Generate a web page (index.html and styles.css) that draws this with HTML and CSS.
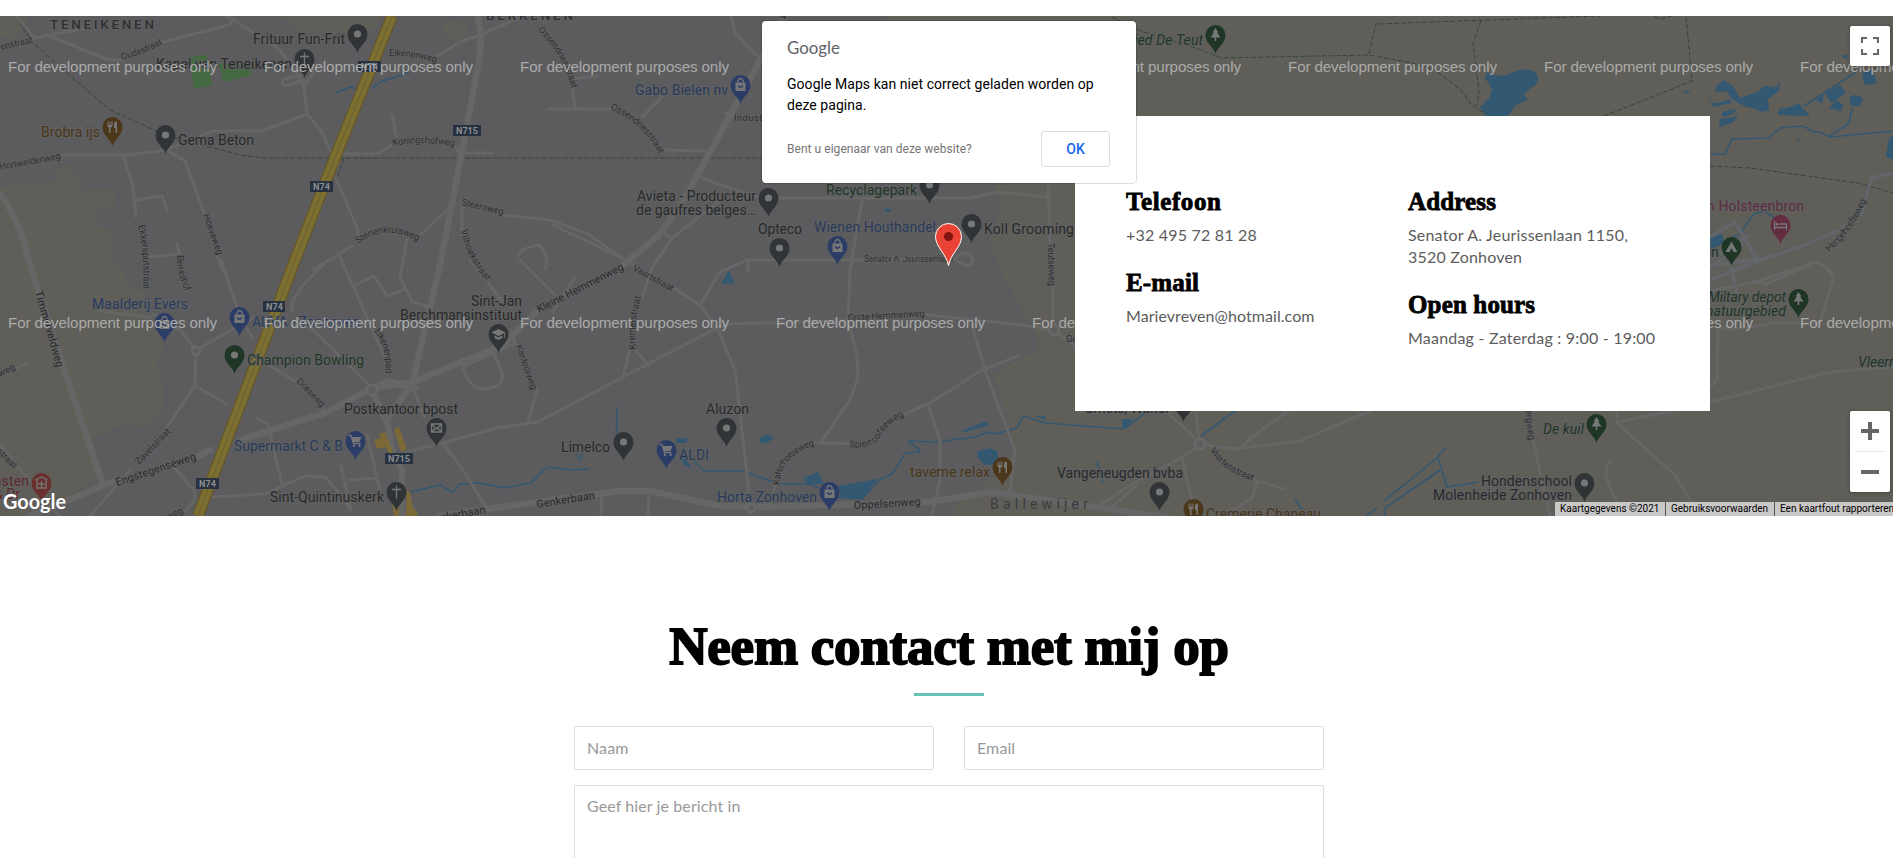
FILE: index.html
```html
<!DOCTYPE html>
<html lang="nl">
<head>
<meta charset="utf-8">
<title>Contact</title>
<link rel="stylesheet" href="styles.css">
</head>
<body>
<section class="map">
<svg class="map-canvas" viewBox="0 16 1893 500" width="1893" height="500">
<defs>
<path id="pin" d="M0 19C-1.600 12-10 8.500-10 0A10 10 0 0 1 10 0C10 8.500 1.600 12 0 19Z"/>
<g id="dot"><circle r="3.600"/></g>
<g id="bag"><path d="M-5-2.500H5V6H-5Z"/><path class="line" d="M-2.600-2.500V-4.500Q0-8.500 2.600-4.500V-2.500"/><path class="cut" d="M-2.500.500Q0 4 2.500.500"/></g>
<g id="cart"><path d="M-4-4H6L4 1H-2.500Z"/><path class="line" d="M-7-5.500H-4.500L-2 2.500H5"/><circle cx="-1.500" cy="4.800" r="1.200"/><circle cx="4" cy="4.800" r="1.200"/></g>
<g id="cross"><path class="line" d="M0-6.500V6.500M-4.500-2.500H4.500"/></g>
<g id="food"><path d="M-5-5.500V-1.500Q-5 .500-3.500.500V6H-2V.500Q0 .500 0-1.500V-5.500H-1V-2H-2V-5.500H-3V-2H-4V-5.500ZM1.500-3Q1.500-5.500 4.500-5.500V6H3V1H1.500Z"/></g>
<g id="tree"><path d="M0-7L3-2.500H1.500L5 2.500H.800V6H-.800V2.500H-5L-1.500-2.500H-3Z"/></g>
<g id="mail"><path class="line" d="M-5-4H5V4H-5ZM-5-4L0 1L5-4M-5 4L-1 0M5 4L1 0"/></g>
<g id="hat"><path d="M0-5L7-1.500L0 2L-7-1.500ZM-4 1.500L0 3.500L4 1.500V4L0 6L-4 4ZM5.800-1H6.800V4H5.800Z"/></g>
<g id="tent"><path d="M0-5.500L6 5H2L0 1L-2 5H-6Z"/></g>
<g id="bed"><path class="line" d="M-6-4V5M-6 2.500H6M6-1V5M-1-1H6"/><circle cx="-3.500" cy="-.800" r="1.500"/></g>
<g id="care"><path class="line" d="M-6-3L0-6L6-3M-4.500-3.500V5H4.500V-3.500M0-2V4M-3 1H3"/></g>
</defs>
<rect class="land" y="16" width="1893" height="500"/>
<g class="heath">
<path d="M0 16H30L13 40L0 35ZM278 16H384L375 29L345 35L300 31ZM444 20L467 22L468 34L455 41L443 31ZM0 187L55 181V170L70 163L75 178L84 181L80 190L115 190L116 205L95 210L96 225L110 229L112 263L125 275L128 288L143 290L150 320L165 347L156 360L163 385L164 405L152 417L147 424L139 428L130 422L92 438L97 460L97 478L40 516H0Z"/>
<path d="M885 16H1893V516H953L954 506L980 490L1013 453L1012 430L993 373L1038 350V337L1000 270L989 240L1001 210L994 183H885Z"/>
</g>
<path class="park" d="M190 57L207 55L212 85L194 89ZM219 63L248 66L252 75L223 82Z"/>
<g class="water">
<path d="M1487 72C1500 79 1508 75 1516 71C1539 65 1540 79 1536 84L1526 92L1524 96Q1532 100 1522 102C1511 107 1514 112 1507 116H1486L1480 107L1489 98L1492 89L1485 78Z"/>
<path d="M1715 88L1723 80L1733 86Q1737 94 1740 98L1757 92L1765 86L1776 87L1780 82L1779 91L1768 99L1769 110L1762 112Q1752 107 1746 107L1733 100L1726 91L1716 92ZM1709 97L1710 103H1718L1731 99V103L1713 107ZM1722 112L1737 109L1733 114L1722 117ZM1720 119L1739 116L1732 123L1719 127ZM1779 109L1790 107L1798 103L1809 114V116L1778 115ZM1862 73L1873 70L1877 83L1864 85ZM1825 93L1840 85L1846 93L1831 103ZM1829 108L1836 100L1843 105L1841 111ZM1850 97Q1858 92 1863 100L1859 107L1850 105ZM1816 100L1824 94L1822 104ZM1842 56L1847 54V60ZM1684 90L1690 92L1688 94L1683 92ZM1798 138L1800 143L1796 138ZM1889 138L1893 136V160L1886 157ZM1710 237L1722 234L1725 243L1711 248Z"/>
<path d="M721 284L729 270L734 283ZM676 438H687V443H676ZM680 456L686 459L692 469L685 466ZM760 438L768 434L773 438L766 444L760 442ZM804 478L818 472L824 484L806 484ZM838 486L877 479L862 499L841 497ZM961 431L987 421L988 426L964 432ZM977 452L990 448L997 451L999 465H985L978 458ZM1122 419L1133 419L1126 428L1122 427ZM1036 416H1045V420Z"/>
<path d="M885 208L891 210V212H885Z"/>
</g>
<g class="stream">
<path d="M336 93L350 87L362 90M372 88L380 82L410 72M410 492L440 485L453 492L460 484L480 483L504 488L531 483L547 467L573 470L589 469M616 450L617 407M694 461L704 471L744 471L778 484L810 484L840 498L862 499L879 480L892 474L896 468L905 453L920 452L918 448L911 444L909 441L935 442L976 437L988 432L996 434L1017 428L1023 416L1045 423L1124 429L1145 413M1201 436L1235 411M1384 501L1437 458L1446 447M1438 458L1447 487L1478 482M1440 470L1385 508L1384 516M1295 499L1302 510M1366 516L1377 508M1097 462L1103 482M576 453Q582 466 582 452"/>
<path d="M1710 154H1725L1732 139L1769 138L1780 128L1803 126L1814 132H1820L1830 137L1893 131M1830 136L1849 123L1852 108M1804 106L1859 70M1710 249L1740 234L1754 214L1764 211L1778 220"/>
</g>
<g class="trail">
<path d="M16 16L32 42L75 80L110 110L165 135L240 155L264 158H764M344 158L337 178M1112 17L1141 31L1196 48L1221 58L1369 55L1412 63L1435 70L1461 90L1471 104L1485 114M1369 54L1376 24L1600 16M1481 21L1473 43L1479 90L1477 106M1604 116L1692 81L1686 16M1710 166L1750 168L1858 183L1893 193M1654 17L1661 19L1675 15"/>
</g>
<g class="road">
<path d="M16 16L35 38L0 50M35 38L85 28M50 36L108 60L124 60M163 42L229 25L234 19L226 16M234 20L279 49L296 72L304 86L316 69M304 80L285 86Q280 82 284 79L302 75M62 155H130L165 150L213 131H262L307 114L304 86M307 114L322 132L332 154H378L396 142M455 146L460 153H493M437 56L462 41L480 35L523 16M392 115L397 139M124 157L133 187L136 217M135 200L162 196L167 210M148 257L180 254L177 243M168 151L185 161L205 215M217 255L222 270M221 260L240 317L253 339M336 178L358 230L357 240M313 270L352 246M338 252L348 275L387 362M407 240L400 277L412 302L430 307M355 285L374 276L387 296L403 290M418 237L445 212L455 203M462 203V235M328 260L303 285L292 303L292 312M305 322L370 386M153 314L180 330L196 350L253 318M196 350L195 385L165 430M195 386L227 404M100 311L153 318M0 377L26 364M0 445L34 486L60 516M130 470L90 516M258 419L268 424L282 484M210 497L265 494L305 476L325 477L345 500L350 510M175 468L195 492V500L180 516M341 466L351 510M349 480L378 478M367 435L380 490M270 366L300 384M320 403L325 413M403 453L443 443L497 428L538 422L623 377L713 330L727 324L870 320M927 315L1023 325L1053 330L1075 345M443 443L463 470L486 507M414 390L424 417M463 367Q470 390 484 389Q508 387 501 370L494 354M463 367L515 343M537 390L528 422M515 344L511 330M575 277L552 313M553 225L620 257M518 256Q520 248 539 245Q551 259 545 269M470 260L504 303M520 260L555 295"/>
<path d="M504 215L550 220L588 234L625 260L680 292L700 305L718 330L735 370L742 430L751 513M700 305L720 272L747 260H952M748 260V270M663 232L672 238L652 268L642 298M672 238L727 195M695 175L715 183L728 187L765 200M548 109H610M575 108L571 79L597 76M642 117L665 94M660 150L705 151M725 113L742 119M731 16L735 33L756 55M631 345L623 377M631 345L648 365M602 494L601 516M649 493L648 516M770 505L776 484M813 443L868 444M822 441L850 400L858 378L857 355L848 320L850 270L862 200M900 416L930 403L962 383L980 371L1018 356M928 405L940 440V480L932 516M972 325L985 370L1015 450L1010 492M765 198H970L998 192L1048 197M1048 183L1050 243M1053 286L1053 330M955 260C961 250 969 252 973 258Q972 270 960 263Z"/>
<path d="M1165 410L1199 442L1196 411M1201 444L1232 449L1300 441L1370 411M1242 447L1252 437L1288 411M1196 448L1170 464L1136 482L1095 508M1110 509L1137 485M1182 458L1192 500M1254 480L1284 489M1257 483L1252 498L1230 512M1533 440L1550 516M1617 411V423L1675 475L1700 516M1618 422L1672 411M1710 402L1830 372L1893 367M1611 460L1606 468V477L1617 503M1710 291L1756 282L1815 262Q1832 267 1833 280L1820 323H1775L1728 330M1710 387L1717 380L1718 330L1730 326M1754 281L1766 284L1810 265"/>
<path class="pale" d="M1893 173L1872 178L1868 190L1862 213L1840 230L1800 247L1758 261L1710 280M1710 237L1735 222L1758 261M1710 268L1742 245M1710 259L1747 236M1710 265L1763 259M1730 260L1737 295"/>
</g>
<g class="road wide">
<path d="M0 194Q20 220 30 265L65 372L103 485M477 12L481 33L480 55L463 147L440 265L413 380M30 516L117 480M197 457L210 450M240 440L325 413L372 388L413 382L503 345L536 312M623 265L657 237L680 207L763 55L785 16M413 382L387 420L393 453L402 470V516M372 390L388 425M372 390L387 381L415 388M440 516L530 503L620 491L650 491L720 506L760 507L930 502L990 492L1060 502L1130 512L1170 518"/>
</g>
<g class="ring"><circle cx="196" cy="351" r="4"/><circle cx="372" cy="390" r="5"/><circle cx="1054" cy="330" r="5"/><circle cx="1200" cy="444" r="5"/><circle cx="751" cy="508" r="4"/></g>
<path class="built" d="M374 440L380 438L379 434L385 432L393 452L389 454L386 447L377 449ZM394 430L399 427L407 449L401 452ZM392 502H399V516H394ZM407 490L410 492L413 508L417 511V516H406Z"/>
<path class="hwy-edge" d="M392 16L336 155L295 260L198 516"/><path class="hwy" d="M392 16L336 155L295 260L198 516"/><path class="hwy-mid" d="M392 16L336 155L295 260L198 516"/>
<g class="shields">
<path d="M358 61H381V72H358ZM310 181H333V192H310ZM453 125H481V136H453ZM263 301H285V312H263ZM385 453H413V464H385ZM196 478H219V489H196Z"/>
<text x="361" y="70" textLength="17">N74</text><text x="313" y="190" textLength="17">N74</text><text x="456" y="134" textLength="22">N715</text><text x="266" y="310" textLength="17">N74</text><text x="388" y="462" textLength="22">N715</text><text x="199" y="487" textLength="17">N74</text>
</g>
<defs>
<path id="r1" d="M1 50L36 42"/><path id="r2" d="M122 60Q145 54 166 42"/><path id="r3" d="M389 56Q412 55 440 64"/><path id="r4" d="M0 170L66 158"/><path id="r5" d="M138 226Q145 250 143 294"/><path id="r6" d="M203 215L219 260"/><path id="r7" d="M177 255Q176 272 187 295"/><path id="r8" d="M358 244Q386 222 421 243"/><path id="r9" d="M393 146Q422 140 458 147"/><path id="r10" d="M461 205L508 216"/><path id="r11" d="M461 230Q465 257 491 286"/><path id="r12" d="M35 292L59 376"/><path id="r13" d="M0 377L18 368"/><path id="r14" d="M374 331Q389 350 385 378"/><path id="r15" d="M296 382L323 409"/><path id="r16" d="M139 465L174 429"/><path id="r17" d="M117 486L201 458"/><path id="r18" d="M-4 452L19 474"/><path id="r19" d="M168 520L190 510"/><path id="r20" d="M538 30Q567 60 572 92"/><path id="r21" d="M610 109Q645 124 660 156"/><path id="r22" d="M539 313L629 267"/><path id="r23" d="M632 270L676 294"/><path id="r24" d="M636 349Q632 328 642 293"/><path id="r25" d="M516 346L533 395"/><path id="r26" d="M537 508L600 498"/><path id="r27" d="M428 524L490 512"/><path id="r28" d="M780 485Q778 457 818 444"/><path id="r29" d="M849 447Q875 450 881 435Q890 421 909 414"/><path id="r30" d="M848 321L930 316"/><path id="r31" d="M854 509L925 505"/><path id="r32" d="M1048 243L1049 290"/><path id="r33" d="M1210 450Q1222 472 1257 482"/><path id="r34" d="M1526 410Q1526 426 1530 446"/><path id="r35" d="M1829 252Q1852 233 1868 197"/>
</defs>
<g class="street">
<text><textPath href="#r1" textLength="33">enstraat</textPath></text><text><textPath href="#r2" textLength="44">Oudestraat</textPath></text><text><textPath href="#r3" textLength="48">Eikenenweg</textPath></text><text><textPath href="#r4" textLength="62">Hortweidenweg</textPath></text><text><textPath href="#r5" textLength="64">Ekkersputstraat</textPath></text><text><textPath href="#r6" textLength="43">Hoeveweg</textPath></text><text><textPath href="#r7" textLength="38">Berrieshof</textPath></text><text><textPath href="#r8" textLength="64">Stenenkruisweg</textPath></text><text><textPath href="#r9" textLength="62">Koningshofweg</textPath></text><text><textPath href="#r10" textLength="43">Steentweg</textPath></text><text><textPath href="#r11" textLength="58">Vilhoekstraat</textPath></text><text><textPath href="#r13">weg</textPath></text><text><textPath href="#r14" textLength="45">Eikenenpad</textPath></text><text><textPath href="#r15" textLength="36">Driesweg</textPath></text><text><textPath href="#r16" textLength="46">Zavelstraat</textPath></text><text><textPath href="#r18">straat</textPath></text><text><textPath href="#r19">weg</textPath></text><text><textPath href="#r20" textLength="68">Ossendriesstraat</textPath></text><text><textPath href="#r21" textLength="68">Ossendriesstraat</textPath></text><text x="734" y="121" textLength="40">Industrie</text><text><textPath href="#r23" textLength="45">Vaartstraat</textPath></text><text><textPath href="#r24" textLength="53">Kremerstraat</textPath></text><text><textPath href="#r25" textLength="47">Kantoorweg</textPath></text><text><textPath href="#r28" textLength="57">Katschotseweg</textPath></text><text><textPath href="#r29" textLength="67">Spierhoofseweg</textPath></text><text><textPath href="#r30" textLength="77">Grote Hemmenweg</textPath></text><text><textPath href="#r32" textLength="43">Teutseweg</textPath></text><text><textPath href="#r33" textLength="54">Vrartenstraat</textPath></text><text><textPath href="#r34" textLength="31">ergweg</textPath></text><text><textPath href="#r35" textLength="64">Hengelhoefseweg</textPath></text><text x="1066" y="342">Gol</text><text class="minor" x="864" y="262" textLength="89">Senator A. Jeurissenlaan</text>
<g class="main"><text><textPath href="#r12" textLength="79">Timmerveldweg</textPath></text><text><textPath href="#r17" textLength="84">Engstegenseweg</textPath></text><text><textPath href="#r22" textLength="96">Kleine Hemmenweg</textPath></text><text><textPath href="#r26" textLength="59">Genkerbaan</textPath></text><text><textPath href="#r27" textLength="59">Genkerbaan</textPath></text><text><textPath href="#r31" textLength="67">Oppelsenweg</textPath></text><text transform="translate(785 20) rotate(-60)">weg</text></g>
</g>
<g class="place">
<text class="town" x="50" y="29" textLength="104">TENEIKENEN</text><text class="town" x="486" y="20" textLength="87">BERKENEN</text><text class="hamlet" x="990" y="509" textLength="98">Ballewijer</text>
<text x="253" y="44" textLength="92">Frituur Fun-Frit</text><text x="156" y="69" textLength="136">Kapel van Teneikenen</text><text x="178" y="145" textLength="76">Gema Beton</text><text x="344" y="414" textLength="114">Postkantoor bpost</text><text x="270" y="502" textLength="114">Sint-Quintinuskerk</text><text x="471" y="306" textLength="51">Sint-Jan</text><text x="400" y="320" textLength="122">Berchmansinstituut</text><text x="561" y="452" textLength="49">Limelco</text><text x="706" y="414" textLength="43">Aluzon</text><text x="637" y="201" textLength="119">Avieta - Producteur</text><text x="636" y="215" textLength="120">de gaufres belges…</text><text x="758" y="234" textLength="44">Opteco</text><text x="984" y="234" textLength="98">Koll Groomingp</text><text x="1057" y="478" textLength="126">Vangeneugden bvba</text><text x="1085" y="413" textLength="85">Smets, Walter</text><text x="1481" y="486" textLength="91">Hondenschool</text><text x="1433" y="500" textLength="139">Molenheide Zonhoven</text>
<g class="shop"><text x="92" y="309" textLength="96">Maalderij Evers</text><text x="252" y="327" textLength="108">AUVA - Zonhoven</text><text x="234" y="451" textLength="109">Supermarkt C &amp; B</text><text x="679" y="460" textLength="30">ALDI</text><text x="717" y="502" textLength="100">Horta Zonhoven</text><text x="635" y="95" textLength="93">Gabo Bielen nv</text><text x="814" y="232" textLength="122">Wienen Houthandel</text></g>
<g class="eat"><text x="41" y="137" textLength="59">Brobra ijs</text><text x="910" y="477" textLength="80">taverne relax</text><text x="1206" y="519" textLength="115">Cremerie Chapeau</text></g>
<g class="nature"><text x="247" y="365" textLength="117">Champion Bowling</text><text x="826" y="195" textLength="91">Recyclagepark</text><text x="1703" y="257">on</text></g>
<g class="nature slant"><text x="1134" y="45" textLength="69">ied De Teut</text><text x="1543" y="434" textLength="41">De kuil</text><text x="1708" y="302" textLength="78">Miltary depot</text><text x="1706" y="316" textLength="80">natuurgebied</text><text x="1858" y="367">Vleermuis</text></g>
<g class="health"><text x="-2" y="486" textLength="31">isten</text><text x="-6" y="499">&amp; Dr</text></g>
<text class="stay" x="1707" y="211" textLength="97">n Holsteenbron</text>
</g>
<g class="poi">
<g transform="translate(357.500 34)"><use href="#pin"/><use class="i" href="#dot"/></g><g transform="translate(304.500 59)"><use href="#pin"/><use class="i" href="#cross"/></g><g transform="translate(165.500 135)"><use href="#pin"/><use class="i" href="#dot"/></g><g transform="translate(436.500 428)"><use href="#pin"/><use class="i" href="#mail"/></g><g transform="translate(396.500 492)"><use href="#pin"/><use class="i" href="#cross"/></g><g transform="translate(498.500 334)"><use href="#pin"/><use class="i" href="#hat"/></g><g transform="translate(623.500 442)"><use href="#pin"/><use class="i" href="#dot"/></g><g transform="translate(726.500 428)"><use href="#pin"/><use class="i" href="#dot"/></g><g transform="translate(768.500 198)"><use href="#pin"/><use class="i" href="#dot"/></g><g transform="translate(779.500 248)"><use href="#pin"/><use class="i" href="#dot"/></g><g transform="translate(929.500 185)"><use href="#pin"/><use class="i" href="#dot"/></g><g transform="translate(971.500 224)"><use href="#pin"/><use class="i" href="#dot"/></g><g transform="translate(1159.500 492)"><use href="#pin"/><use class="i" href="#dot"/></g><g transform="translate(1183.500 403)"><use href="#pin"/><use class="i" href="#dot"/></g><g transform="translate(1584.500 483)"><use href="#pin"/><use class="i" href="#dot"/></g>
<g class="blue"><g transform="translate(164.500 323)"><use href="#pin"/><use class="i" href="#bag"/></g><g transform="translate(239.500 317)"><use href="#pin"/><use class="i" href="#bag"/></g><g transform="translate(355.500 441)"><use href="#pin"/><use class="i" href="#cart"/></g><g transform="translate(666.500 450)"><use href="#pin"/><use class="i" href="#cart"/></g><g transform="translate(829.500 492)"><use href="#pin"/><use class="i" href="#bag"/></g><g transform="translate(740.500 85)"><use href="#pin"/><use class="i" href="#bag"/></g><g transform="translate(837.500 246)"><use href="#pin"/><use class="i" href="#bag"/></g></g>
<g class="brown"><g transform="translate(112.500 127)"><use href="#pin"/><use class="i" href="#food"/></g><g transform="translate(1002.500 467)"><use href="#pin"/><use class="i" href="#food"/></g><g transform="translate(1193.500 509)"><use href="#pin"/><use class="i" href="#food"/></g></g>
<g class="green"><g transform="translate(234.500 355)"><use href="#pin"/><use class="i" href="#dot"/></g><g transform="translate(1215.500 35)"><use href="#pin"/><use class="i" href="#tree"/></g><g transform="translate(1596.500 424)"><use href="#pin"/><use class="i" href="#tree"/></g><g transform="translate(1798.500 299)"><use href="#pin"/><use class="i" href="#tree"/></g><g transform="translate(1731.500 247)"><use href="#pin"/><use class="i" href="#tent"/></g></g>
<g class="red" transform="translate(41.500 483)"><use href="#pin"/><use class="i" href="#care"/></g>
<g class="pink" transform="translate(1780.500 225)"><use href="#pin"/><use class="i" href="#bed"/></g>
</g>
<g class="watermark">
<text x="8" y="72" textLength="209">For development purposes only</text><text x="264" y="72" textLength="209">For development purposes only</text><text x="520" y="72" textLength="209">For development purposes only</text><text x="1032" y="72" textLength="209">For development purposes only</text><text x="1288" y="72" textLength="209">For development purposes only</text><text x="1544" y="72" textLength="209">For development purposes only</text><text x="1800" y="72" textLength="209">For development purposes only</text>
<text x="8" y="328" textLength="209">For development purposes only</text><text x="264" y="328" textLength="209">For development purposes only</text><text x="520" y="328" textLength="209">For development purposes only</text><text x="776" y="328" textLength="209">For development purposes only</text><text x="1032" y="328" textLength="209">For development purposes only</text><text x="1544" y="328" textLength="209">For development purposes only</text><text x="1800" y="328" textLength="209">For development purposes only</text>
</g>
<path class="marker" d="M948.500 265.500C946 253 935.500 247 935.500 236.500A13 13 0 0 1 961.500 236.500C961.500 247 951 253 948.500 265.500Z"/><circle class="marker-eye" cx="948.500" cy="236.500" r="4.600"/>
<text class="map-logo" x="3" y="509" textLength="63" lengthAdjust="spacingAndGlyphs">Google</text>
</svg>
<div class="info">
<div class="info-col"><h3 class="h-tel">Telefoon</h3><p><span class="w1">+32 495 72 81 28</span></p><h3>E-mail</h3><p><span class="w2">Marievreven@hotmail.com</span></p></div>
<div class="info-col"><h3>Address</h3><p><span class="w3">Senator A. Jeurissenlaan 1150,</span><br><span class="w3">3520 Zonhoven</span></p><h3>Open hours</h3><p><span class="w1">Maandag - Zaterdag : 9:00 - 19:00</span></p></div>
</div>
<div class="dialog">
<svg class="dialog-logo" width="54" height="20" viewBox="0 0 54 20"><text x="0" y="15" textLength="53" lengthAdjust="spacingAndGlyphs">Google</text></svg>
<p class="dialog-msg">Google Maps kan niet correct geladen worden op deze pagina.</p>
<div class="dialog-row"><span class="dialog-owner">Bent u eigenaar van deze website?</span><button class="ok">OK</button></div>
</div>
<button class="ctl full" aria-label="Volledig scherm"><svg width="18" height="18" viewBox="0 0 18 18"><path d="M0 0H6V2H2V6H0ZM12 0H18V6H16V2H12ZM0 12H2V16H6V18H0ZM16 12H18V18H12V16H16Z"/></svg></button>
<div class="ctl zoom"><svg width="18" height="18" viewBox="0 0 18 18"><path d="M7 0H11V7H18V11H11V18H7V11H0V7H7Z"/></svg><i></i><svg width="18" height="18" viewBox="0 0 18 18"><path d="M0 7H18V11H0Z"/></svg></div>
<div class="legal"><span class="l1">Kaartgegevens ©2021</span><span class="l2">Gebruiksvoorwaarden</span><span class="l3">Een kaartfout rapporteren</span></div>
</section>
<section class="contact">
<h2>Neem contact met mij op</h2>
<div class="bar"></div>
<form class="form"><input placeholder="Naam"><input placeholder="Email"><textarea placeholder="Geef hier je bericht in"></textarea></form>
</section>
</body>
</html>
```
FILE: styles.css
```css
* { box-sizing: border-box; }
html, body { height: 858px; overflow: hidden; }
body { margin: 0; display: flex; flex-direction: column; padding-top: 16px; background: #fff; font-family: Lato, "Open Sans", sans-serif; color: #5c5c5c; }
h2, h3, p { margin: 0; }
.map { position: relative; flex: none; height: 500px; overflow: hidden; }
.map-canvas { display: block; }
.land { fill: #5c5c5e; }
.heath { fill: #605e58; }
.park { fill: #42693f; }
.built { fill: #7b6a35; }
.water { fill: #335872; }
.stream { fill: none; stroke: #335872; stroke-width: 1.600; }
.trail { fill: none; stroke: #35453b; stroke-width: 1; stroke-dasharray: 5 2; }
.road { fill: none; stroke: #666; stroke-width: 3; stroke-linejoin: round; stroke-linecap: round; }
.road .pale { stroke: #62666b; stroke-width: 3.500; }
.wide { stroke-width: 6.500; }
.ring { fill: #5e5e5e; stroke: #686868; stroke-width: 3; }
.hwy-edge, .hwy, .hwy-mid { fill: none; stroke: #665628; stroke-width: 12; }
.hwy { stroke: #7b6f31; stroke-width: 9.500; }
.hwy-mid { stroke-width: .600; }
.shields { fill: #263242; }
.shields text { fill: #8e8e8e; font: bold 9px Roboto, sans-serif; }
.street, .place { paint-order: stroke; stroke: #616161; stroke-width: 2; stroke-linejoin: round; font-family: Roboto, sans-serif; }
.street { fill: #2c3032; font-size: 9.500px; }
.minor { font-size: 8.500px; }
.main { fill: #26292b; font-size: 10.800px; }
.place { fill: #26292b; font-size: 14px; }
.town { font-size: 13.500px; font-weight: 500; fill: #303032; }
.hamlet { fill: #3c3c3c; stroke-width: 1; }
.shop { fill: #273a5c; }
.eat { fill: #493518; }
.nature { fill: #1f3526; }
.slant { font-style: italic; }
.health { fill: #5b2928; }
.stay { fill: #5b2c3e; }
.poi { fill: #303436; }
.blue { fill: #2b3d66; }
.brown { fill: #4b381b; }
.green { fill: #1f3526; }
.red { fill: #69302d; }
.pink { fill: #632c41; }
.i { fill: #777; }
.line, .cut { fill: none; stroke: #777; stroke-width: 1.300; }
.cut { stroke: #2b3d66; }
.watermark { fill: #aaa; font: 15.200px "Liberation Sans", Arial, sans-serif; }
.marker { fill: #ea4335; stroke: #fff; stroke-width: 1; }
.marker-eye { fill: #811411; }
.map-logo { fill: #fff; stroke: #555; stroke-width: 1; paint-order: stroke; font: bold 20px Lato, sans-serif; }
.info { position: absolute; left: 1075px; top: 100px; width: 635px; height: 295px; padding: 71px 50px 0 51px; background: #fff; display: flex; }
.info-col { width: 282px; flex: none; }
.info h3 { color: #000; font: bold 25px/29px "Liberation Serif", serif; letter-spacing: .150px; -webkit-text-stroke: .800px #000; }
.info .h-tel { letter-spacing: .600px; }
.info p { font-size: 16px; line-height: 22px; margin: 8px 0 22px; white-space: nowrap; }
.w1 { letter-spacing: .210px; }
.w2 { letter-spacing: .060px; }
.w3 { letter-spacing: .200px; }
.dialog { position: absolute; left: 762px; top: 5px; width: 374px; height: 162px; padding: 18px 26px 0 25px; background: #fff; border-radius: 4px; box-shadow: 0 0 1px 1px rgba(0,0,0,.15); font-family: Roboto, sans-serif; }
.dialog-logo { display: block; fill: #5f6368; font: 17.500px Lato, sans-serif; }
.dialog-msg { margin-top: 15px; color: #000; font-size: 14px; line-height: 21px; letter-spacing: .050px; }
.dialog-row { margin-top: 15px; display: flex; justify-content: space-between; align-items: center; }
.dialog-owner { color: #757575; font-size: 12px; letter-spacing: .040px; }
.ok { width: 69px; height: 36px; padding: 0; border: 1px solid #dadce0; border-radius: 3px; background: #fff; color: #1a66e8; font: 500 14px Roboto, sans-serif; }
.ctl { position: absolute; right: 3px; width: 40px; padding: 0; border: 0; border-radius: 2px; background: #fff; fill: #666; display: flex; align-items: center; justify-content: center; box-shadow: 0 1px 4px rgba(0,0,0,.3); }
.full { top: 10px; height: 40px; }
.zoom { top: 395px; height: 81px; flex-direction: column; gap: 11px; }
.zoom i { width: 30px; height: 1px; background: #e6e6e6; }
.legal { position: absolute; left: 1555px; bottom: 0; width: 338px; height: 14px; display: flex; background: #c9c8c7; color: #000; font: 10px/14px Roboto, sans-serif; white-space: nowrap; overflow: hidden; }
.legal span { padding: 0 5px; border-right: 1px solid #555; flex: none; }
.l1 { width: 111px; }
.l2 { width: 109px; }
.contact { flex: 1; min-height: 0; overflow: hidden; display: flex; flex-direction: column; align-items: center; padding: 98px 0 0 5px; }
.contact h2 { flex: none; color: #000; font: bold 53px/64px "Liberation Serif", serif; letter-spacing: -.250px; white-space: nowrap; -webkit-text-stroke: 1.800px #000; }
.bar { flex: none; width: 70px; height: 3px; margin-top: 15px; background: #67c2b5; }
.form { width: 750px; flex: none; margin-top: 30px; display: grid; grid-template-columns: 360px 360px; column-gap: 30px; row-gap: 15px; }
.form input, .form textarea { border: 1px solid #ddd; border-radius: 2px; padding: 0 12px; font: 16px Lato, sans-serif; outline: 0; resize: none; }
.form input { height: 44px; padding-bottom: 2px; }
.form textarea { grid-column: span 2; height: 160px; padding-top: 10px; }
::placeholder { color: #999; opacity: 1; letter-spacing: .100px; }
```
